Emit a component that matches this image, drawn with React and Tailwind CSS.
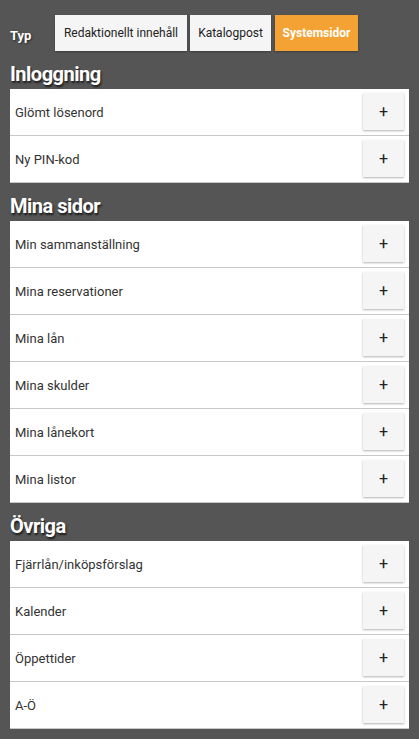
import React from "react";

const sections = [
  { title: "Inloggning", items: ["Glömt lösenord", "Ny PIN-kod"] },
  {
    title: "Mina sidor",
    items: [
      "Min sammanställning",
      "Mina reservationer",
      "Mina lån",
      "Mina skulder",
      "Mina lånekort",
      "Mina listor",
    ],
  },
  {
    title: "Övriga",
    items: ["Fjärrlån/inköpsförslag", "Kalender", "Öppettider", "A-Ö"],
  },
];

export default function App() {
  return (
    <div
      className="min-h-[739px] w-full bg-[#555555] px-[10px] pt-[15px] pb-[10px]"
      style={{ fontFamily: "Roboto, 'Liberation Sans', sans-serif" }}
    >
      <div className="flex items-center h-[36px]">
        <span className="w-[45px] text-[13px] font-bold text-white [text-shadow:1px_1px_2px_rgba(0,0,0,0.5)] pt-[6px]">
          Typ
        </span>
        <div className="flex gap-[3px] h-full">
          <button className="h-full w-[132px] bg-[#f5f5f5] text-[12px] text-[#222] shadow-[0_1px_2px_rgba(0,0,0,0.3)]">
            Redaktionellt innehåll
          </button>
          <button className="h-full w-[81px] bg-[#f5f5f5] text-[12px] text-[#222] shadow-[0_1px_2px_rgba(0,0,0,0.3)]">
            Katalogpost
          </button>
          <button className="h-full w-[83px] ml-[1px] bg-[#f4a234] text-[12px] font-bold text-white shadow-[0_1px_2px_rgba(0,0,0,0.3)]">
            Systemsidor
          </button>
        </div>
      </div>
      {sections.map((s) => (
        <div key={s.title}>
          <h2 className="h-[38px] pt-[11px] text-[20px] leading-[24px] font-bold text-white tracking-[-0.5px] [text-shadow:1px_2px_2px_rgba(0,0,0,0.7)]">
            {s.title}
          </h2>
          <div className="w-[399px] bg-white">
            {s.items.map((it) => (
              <div
                key={it}
                className="flex items-start justify-between h-[47px] border-b border-[#c8c8c8] pl-[5px] pr-[5px]"
              >
                <span className="mt-[14px] text-[13px] text-[#333]">{it}</span>
                <button className="mt-[4px] w-[41px] h-[37px] bg-[#f5f5f5] shadow-[0_1px_2px_rgba(0,0,0,0.3)] text-[16px] text-[#222] flex items-center justify-center">
                  +
                </button>
              </div>
            ))}
          </div>
        </div>
      ))}
    </div>
  );
}
